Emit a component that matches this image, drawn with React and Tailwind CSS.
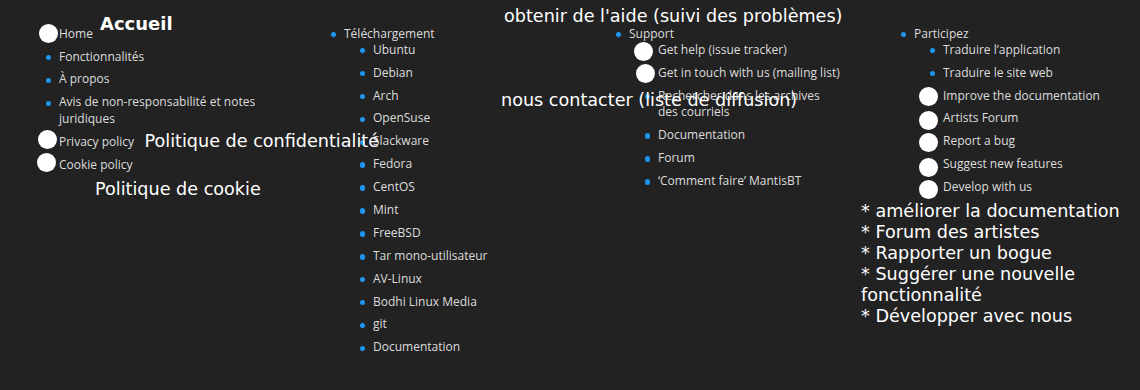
const columns = [
  {
    items: [
      { label: "Home" },
      { label: "Fonctionnalités" },
      { label: "À propos" },
      { label: "Avis de non-responsabilité et notes juridiques" },
      { label: "Privacy policy" },
      { label: "Cookie policy" },
    ],
  },
  {
    items: [
      {
        label: "Téléchargement",
        children: [
          "Ubuntu",
          "Debian",
          "Arch",
          "OpenSuse",
          "Slackware",
          "Fedora",
          "CentOS",
          "Mint",
          "FreeBSD",
          "Tar mono-utilisateur",
          "AV-Linux",
          "Bodhi Linux Media",
          "git",
          "Documentation",
        ],
      },
    ],
  },
  {
    items: [
      {
        label: "Support",
        children: [
          "Get help (issue tracker)",
          "Get in touch with us (mailing list)",
          "Rechercher dans les archives des courriels",
          "Documentation",
          "Forum",
          "‘Comment faire’ MantisBT",
        ],
      },
    ],
  },
  {
    items: [
      {
        label: "Participez",
        children: [
          "Traduire l’application",
          "Traduire le site web",
          "Improve the documentation",
          "Artists Forum",
          "Report a bug",
          "Suggest new features",
          "Develop with us",
        ],
      },
    ],
  },
];

const bullet =
  "relative mb-[6.2px] before:content-[''] before:absolute before:left-[-13.5px] before:top-[6.2px] before:w-[5.5px] before:h-[5.5px] before:rounded-full before:bg-[#1e96f0]";

// annotation dots, centre coordinates
const dots = [
  [48.8, 33.3],
  [47.2, 139.5],
  [46.2, 162.5],
  [643.5, 51.5],
  [645.5, 73],
  [928.5, 96.7],
  [928.5, 120],
  [928.5, 142.5],
  [928.5, 167],
  [928.5, 189],
];

const Column = ({ items }) => (
  <div className="pl-[15px] pr-[15px]">
    <ul className="pl-[44px]">
      {items.map((item) => (
        <li key={item.label} className={bullet}>
          {item.label}
          {item.children && (
            <ul className="pl-[29px] -mt-[0.6px]">
              {item.children.map((c) => (
                <li key={c} className={bullet}>
                  {c}
                </li>
              ))}
            </ul>
          )}
        </li>
      ))}
    </ul>
  </div>
);

export default function App() {
  return (
    <div className="relative w-full min-h-[390px] bg-[#222222] overflow-hidden">
      {/* FOOTER LINKS */}
      <div
        className="grid grid-cols-4 pt-[25.7px] text-[12px] leading-[16.7px] text-[#dddddd]"
        style={{ fontFamily: '"Open Sans", sans-serif' }}
      >
        {columns.map((col, i) => (
          <Column key={i} items={col.items} />
        ))}
      </div>

      {/* ANNOTATIONS */}
      <div
        className="absolute inset-0 text-white text-[17.6px] leading-[21px]"
        style={{ fontFamily: '"DejaVu Sans", sans-serif' }}
      >
        {dots.map(([x, y], i) => (
          <span
            key={i}
            className="absolute w-[19px] h-[19px] rounded-full bg-white"
            style={{ left: x - 9.5, top: y - 9.5 }}
          />
        ))}
        <div className="absolute left-[100px] top-[12.5px] font-bold text-[18px]">Accueil</div>
        <div className="absolute left-[504px] top-[6px] whitespace-nowrap">
          obtenir de l'aide (suivi des problèmes)
        </div>
        <div className="absolute left-[501px] top-[89.5px] whitespace-nowrap">
          nous contacter (liste de diffusion)
        </div>
        <div className="absolute left-[144.5px] top-[131px] whitespace-nowrap">
          Politique de confidentialité
        </div>
        <div className="absolute left-[95px] top-[178.5px] whitespace-nowrap">
          Politique de cookie
        </div>
        <div className="absolute left-[861px] top-[201px] w-[279px]">
          <div>* améliorer la documentation</div>
          <div>* Forum des artistes</div>
          <div>* Rapporter un bogue</div>
          <div>* Suggérer une nouvelle fonctionnalité</div>
          <div>* Développer avec nous</div>
        </div>
      </div>
    </div>
  );
}
